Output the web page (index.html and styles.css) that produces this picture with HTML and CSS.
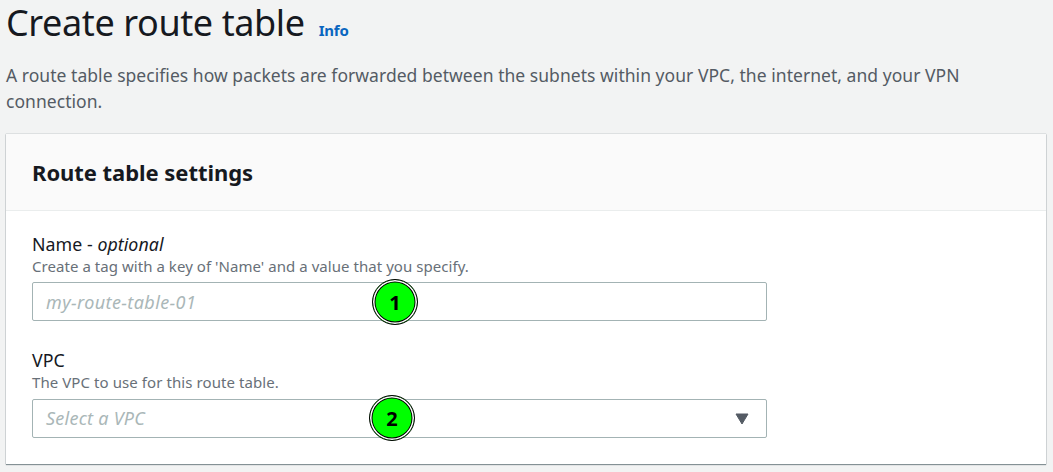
FILE: index.html
```html
<!DOCTYPE html>
<html lang="en">
<head>
<meta charset="utf-8">
<title>Create route table</title>
<link rel="stylesheet" href="styles.css">
</head>
<body>
<main>
  <header class="page-header">
    <h1><span class="title">Create route table</span><a class="info">Info</a></h1>
    <p class="description">A route table specifies how packets are forwarded between the subnets within your VPC, the internet, and your VPN<br>connection.</p>
  </header>
  <section class="card">
    <div class="card-header"><h2>Route table settings</h2></div>
    <div class="card-body">
      <div class="field">
        <div class="label">Name - <em>optional</em></div>
        <div class="hint">Create a tag with a key of 'Name' and a value that you specify.</div>
        <div class="control"><span class="placeholder name">my-route-table-01</span><span class="badge one">1</span></div>
      </div>
      <div class="field">
        <div class="label">VPC</div>
        <div class="hint">The VPC to use for this route table.</div>
        <div class="control"><span class="placeholder">Select a VPC</span>
          <svg class="caret" width="14" height="12" viewBox="0 0 14 12"><path d="M1 1h12L7 11z" fill="#545b64" stroke="#545b64" stroke-linejoin="round"/></svg>
          <span class="badge two">2</span></div>
      </div>
    </div>
  </section>
</main>
</body>
</html>
```
FILE: styles.css
```css
* { box-sizing: border-box; }
body { margin: 0; width: 1053px; height: 472px; overflow: hidden; background: #f2f3f3; color: #16191f; font-family: "Noto Sans", sans-serif; }
h1, h2, p { margin: 0; font-weight: 400; }
.page-header { height: 134px; padding-left: 6px; }
h1 { display: flex; align-items: baseline; height: 62px; font-size: 36px; line-height: 46px; }
.title { letter-spacing: -0.4px; }
.info { margin-left: 14px; font-size: 15px; font-weight: 700; letter-spacing: -0.2px; color: #0a66c0; }
.description { font-size: 17.5px; line-height: 26px; letter-spacing: 0.04px; color: #545b64; white-space: nowrap; }
.card { width: 1040px; margin-left: 6px; height: 330px; background: #fff; box-shadow: 0 1px 1px rgba(0,28,36,.4), 0 0 1px rgba(0,28,36,.5); }
.card-header { height: 77px; padding: 0 26px; background: #fafafa; border-bottom: 1px solid #eaeded; }
h2 { font-size: 22px; font-weight: 700; line-height: 76px; letter-spacing: -0.05px; }
.card-body { padding: 21px 26px; }
.field { height: 116px; }
.label { height: 23px; font-size: 17.8px; line-height: 24px; letter-spacing: 0.04px; }
.hint { height: 27px; font-size: 15px; line-height: 22px; letter-spacing: 0.05px; color: #687078; }
.field + .field .hint { height: 28px; letter-spacing: 0.08px; }
.control { position: relative; display: flex; align-items: center; justify-content: space-between; width: 735px; height: 39px; padding: 0 17px 0 13px; border: 1px solid #a3b3b4; border-radius: 2px; }
.placeholder { font-size: 18px; line-height: 24px; font-style: italic; letter-spacing: 0.25px; color: #aab7b8; }
.field + .field .placeholder { margin-top: -2px; }
.name { letter-spacing: 0.4px; }
.badge { position: absolute; top: -4px; width: 46px; height: 46px; border: 1px solid #000; border-radius: 50%; background: #0f0; box-shadow: inset 0 0 0 1.5px #fff, inset 0 0 0 2.5px #000; color: #000; font-size: 20px; font-weight: 700; line-height: 45px; text-align: center; }
.one { left: 339px; }
.two { left: 336px; top: -5px; }
```
